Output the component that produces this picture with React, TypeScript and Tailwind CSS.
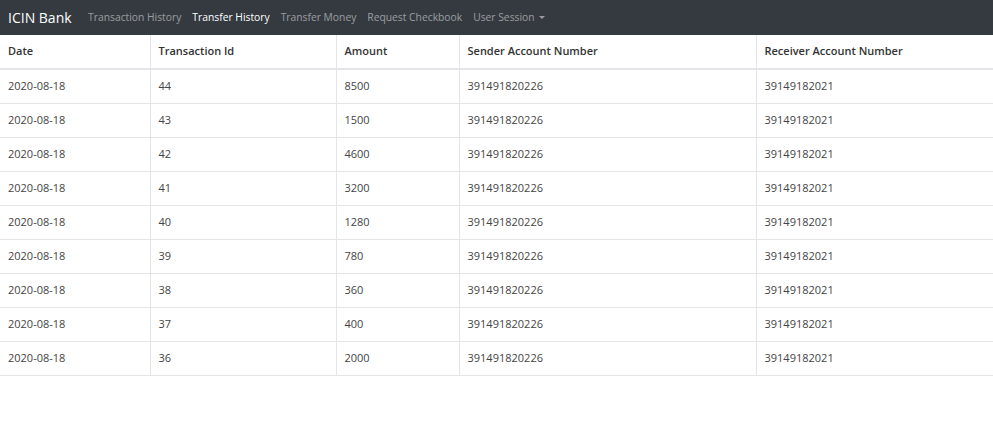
import { useState } from 'react';

interface Transfer {
    date: string;
    id: number;
    amount: number;
    sender: string;
    receiver: string;
}

const rows: Transfer[] = [
    { date: '2020-08-18', id: 44, amount: 8500, sender: '391491820226', receiver: '39149182021' },
    { date: '2020-08-18', id: 43, amount: 1500, sender: '391491820226', receiver: '39149182021' },
    { date: '2020-08-18', id: 42, amount: 4600, sender: '391491820226', receiver: '39149182021' },
    { date: '2020-08-18', id: 41, amount: 3200, sender: '391491820226', receiver: '39149182021' },
    { date: '2020-08-18', id: 40, amount: 1280, sender: '391491820226', receiver: '39149182021' },
    { date: '2020-08-18', id: 39, amount: 780, sender: '391491820226', receiver: '39149182021' },
    { date: '2020-08-18', id: 38, amount: 360, sender: '391491820226', receiver: '39149182021' },
    { date: '2020-08-18', id: 37, amount: 400, sender: '391491820226', receiver: '39149182021' },
    { date: '2020-08-18', id: 36, amount: 2000, sender: '391491820226', receiver: '39149182021' },
];

const links = ['Transaction History', 'Transfer History', 'Transfer Money', 'Request Checkbook'];

export default function App() {
    const [active] = useState('Transfer History');

    return (
        <div className="min-h-[422px] bg-white text-[#444]" style={{ fontFamily: '"Open Sans", "Noto Sans", sans-serif' }}>
            <nav className="h-[35px] bg-[#343a40] flex items-center pl-[8px]">
                <span className="text-white text-[14px] mr-[11px]">ICIN Bank</span>
                {links.map(l => (
                    <span key={l} className={`text-[10.3px] px-[5.5px] ${l === active ? 'text-white' : 'text-white/50'}`}>{l}</span>
                ))}
                <span className="text-[10.3px] px-[5.5px] text-white/50 flex items-center gap-[4px]">
                    User Session
                    <span className="inline-block w-0 h-0 border-l-[3px] border-r-[3px] border-t-[3px] border-l-transparent border-r-transparent border-t-white/50" />
                </span>
            </nav>

            <table className="w-full border-collapse text-[11px] table-fixed">
                <colgroup>
                    <col className="w-[150px]" />
                    <col className="w-[186px]" />
                    <col className="w-[123px]" />
                    <col className="w-[297px]" />
                    <col />
                </colgroup>
                <thead>
                    <tr className="h-[34px] border-b-2 border-[#e3e5e8]">
                        {['Date', 'Transaction Id', 'Amount', 'Sender Account Number', 'Receiver Account Number'].map((h, i) => (
                            <th key={h} className={`text-left font-semibold text-[#333] px-[8px] ${i > 0 ? 'border-l border-[#e3e5e8]' : ''}`}>{h}</th>
                        ))}
                    </tr>
                </thead>
                <tbody>
                    {rows.map(r => (
                        <tr key={r.id} className="h-[34px] border-b border-[#e3e5e8]">
                            <td className="px-[8px]">{r.date}</td>
                            <td className="px-[8px] border-l border-[#e3e5e8]">{r.id}</td>
                            <td className="px-[8px] border-l border-[#e3e5e8]">{r.amount}</td>
                            <td className="px-[8px] border-l border-[#e3e5e8]">{r.sender}</td>
                            <td className="px-[8px] border-l border-[#e3e5e8]">{r.receiver}</td>
                        </tr>
                    ))}
                </tbody>
            </table>
        </div>
    );
}
